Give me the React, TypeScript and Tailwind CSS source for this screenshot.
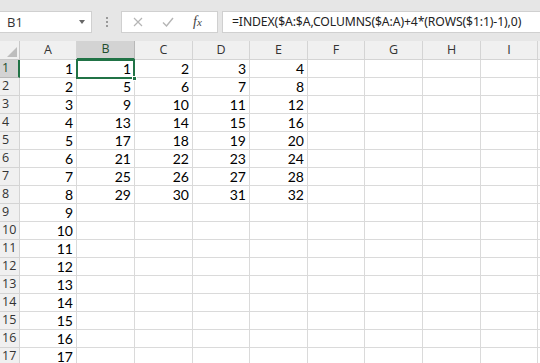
import React from 'react';

const cols = ['A', 'B', 'C', 'D', 'E', 'F', 'G', 'H', 'I'];
const rows = Array.from({ length: 17 }, (_, i) => i + 1);

// value shown in a cell, or '' when empty
function cellValue(r: number, c: number): string {
  if (c === 0) return String(r);
  if (c >= 1 && c <= 4 && r <= 8) return String(4 * (r - 1) + c);
  return '';
}

export default function App() {
  return (
    <div className="w-[540px] h-[363px] overflow-hidden bg-white select-none" style={{ fontFamily: 'Lato, "Noto Sans", sans-serif' }}>
      {/* formula bar */}
      <div className="h-[41px] bg-[#e6e6e6] flex items-start pt-[11px] gap-0">
        <div className="w-[92px] h-[22px] bg-white border border-[#d0d0d0] border-l-0 flex items-center justify-between pl-[7px] pr-[6px]">
          <span className="text-[13px] text-[#333] leading-none" style={{ fontFamily: '"Open Sans", sans-serif' }}>B1</span>
          <span className="w-0 h-0 border-l-[3.5px] border-r-[3.5px] border-t-[4px] border-l-transparent border-r-transparent border-t-[#666]" />
        </div>
        <div className="w-[29px] h-[22px] flex flex-col items-center justify-center gap-[2px]">
          <span className="w-[2px] h-[2px] bg-[#999]" />
          <span className="w-[2px] h-[2px] bg-[#999]" />
          <span className="w-[2px] h-[2px] bg-[#999]" />
        </div>
        <div className="w-[97px] h-[22px] bg-white border border-[#d0d0d0] flex items-center">
          <svg className="ml-[11px]" width="10" height="10" viewBox="0 0 10 10">
            <path d="M1 1 L9 9 M9 1 L1 9" stroke="#b5b5b5" strokeWidth="1.2" fill="none" />
          </svg>
          <svg className="ml-[19px]" width="12" height="10" viewBox="0 0 12 10">
            <path d="M1 5.5 L4.5 9 L11 1" stroke="#b5b5b5" strokeWidth="1.4" fill="none" />
          </svg>
          <span className="ml-[19px] text-[14px] italic text-[#444] leading-none" style={{ fontFamily: '"Liberation Serif", serif' }}>
            f<span className="text-[11px]">x</span>
          </span>
        </div>
        <div className="ml-[4px] flex-1 h-[22px] bg-white border border-[#d0d0d0] border-r-0 flex items-center pl-[9px]">
          <span className="text-[12.2px] text-[#222] whitespace-nowrap leading-none" style={{ fontFamily: '"Noto Sans", sans-serif', letterSpacing: '-0.1px' }}>
            =INDEX($A:$A,COLUMNS($A:A)+4*(ROWS($1:1)-1),0)
          </span>
        </div>
      </div>

      {/* grid */}
      <div className="grid grid-cols-[20px_57px_58px_58px_57px_58px_57px_58px_58px_57px_1fr] relative">
        {/* column headers */}
        <div className="h-[19px] bg-[#f0f0f0] border-r border-b border-[#c8c8c8] relative">
          <svg className="absolute right-[2px] bottom-[2px]" width="10" height="10" viewBox="0 0 10 10">
            <path d="M10 0 L10 10 L0 10 Z" fill="#bdbdbd" />
          </svg>
        </div>
        {cols.map((c) => (
          <div
            key={c}
            className={
              c === 'B'
                ? 'h-[19px] bg-[#d3d3d3] border-r border-[#b8b8b8] border-b-2 border-b-[#217346] flex items-center justify-center text-[12.5px] text-[#1e4d2e]'
                : 'h-[19px] bg-[#f0f0f0] border-r border-b border-[#d4d4d4] flex items-center justify-center text-[12.5px] text-[#333]'
            }
            style={{ fontFamily: '"Open Sans", sans-serif' }}
          >
            {c}
          </div>
        ))}
        <div className="h-[19px] bg-[#f0f0f0] border-b border-[#d4d4d4]" />

        {/* rows */}
        {rows.map((r) => (
          <React.Fragment key={r}>
            <div
              className={
                r === 1
                  ? 'h-[18px] bg-[#d3d3d3] border-r-2 border-r-[#217346] border-b border-[#b8b8b8] flex items-center pl-[2px] text-[12.5px] text-[#1e4d2e]'
                  : 'h-[18px] bg-[#f0f0f0] border-r border-b border-[#d4d4d4] flex items-center pl-[2px] text-[12.5px] text-[#333]'
              }
              style={{ fontFamily: '"Open Sans", sans-serif' }}
            >
              {r}
            </div>
            {cols.map((c, ci) => (
              <div
                key={c}
                className="h-[18px] border-r border-b border-[#dadada] flex items-center justify-end pr-[3px] text-[14px] text-black leading-none"
              >
                {cellValue(r, ci)}
              </div>
            ))}
            <div className="h-[18px] border-b border-[#dadada]" />
          </React.Fragment>
        ))}

        {/* active cell B1 */}
        <div className="absolute left-[76px] top-[18px] w-[59px] h-[20px] border-2 border-[#217346] pointer-events-none">
          <span className="absolute right-[-4px] bottom-[-4px] w-[5px] h-[5px] bg-[#217346] border border-white" />
        </div>
      </div>
    </div>
  );
}
